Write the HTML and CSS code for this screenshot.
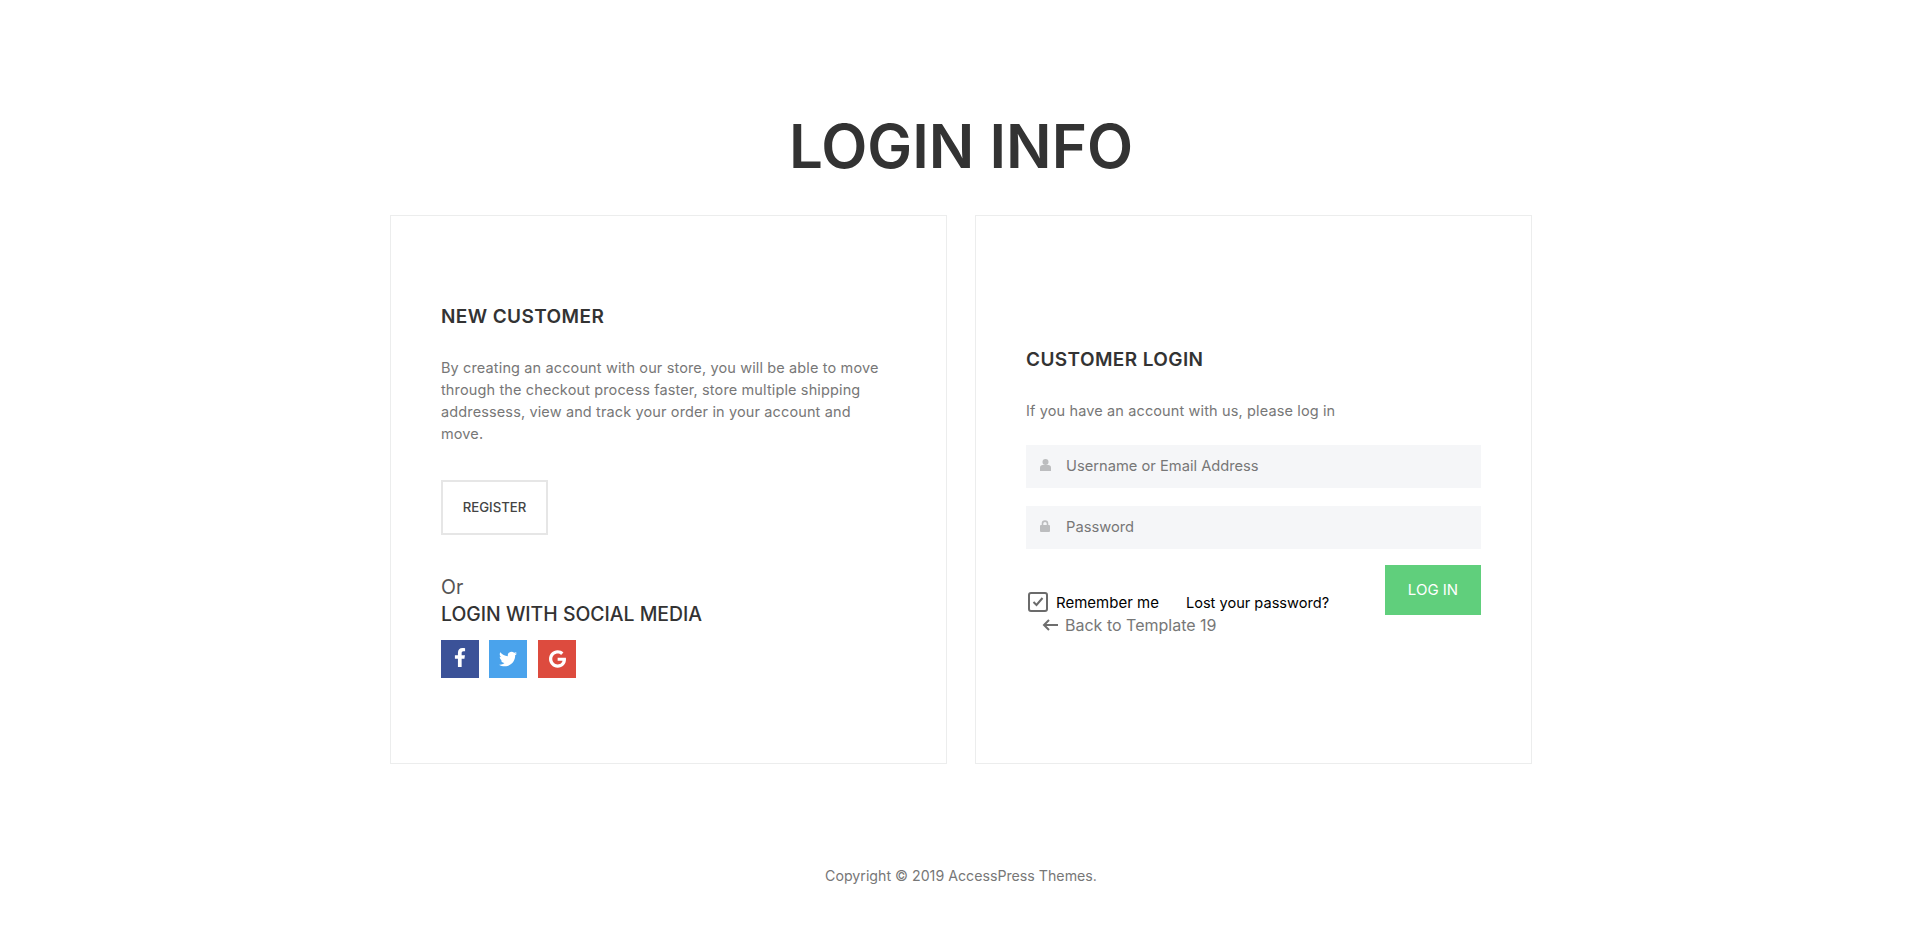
FILE: index.html
```html
<!DOCTYPE html>
<html lang="en">
<head>
  <meta charset="UTF-8" />
  <title>Login Info</title>
  <link rel="stylesheet" href="styles.css">
</head>
<body>

  <h1 class="page-title">LOGIN INFO</h1>

  <div class="container">
    <!-- New customer -->
    <div class="card">
      <h3 class="card-title new-title">NEW CUSTOMER</h3>
      <p class="card-text">By creating an account with our store, you will be able to move through the checkout process faster, store multiple shipping addressess, view and track your order in your account and move.</p>
      <a class="register-btn" href="#">REGISTER</a>
      <div class="or">Or</div>
      <h4 class="social-title">LOGIN WITH SOCIAL MEDIA</h4>
      <div class="social">
        <a class="social-link fb" href="#"><svg width="12" height="19" viewBox="0 0 320 512"><path fill="#fff" d="M279.14 288l14.22-92.66h-88.91v-60.13c0-25.35 12.42-50.06 52.24-50.06h40.42V6.26S260.43 0 225.36 0c-73.22 0-121.08 44.38-121.08 124.72v70.62H22.89V288h81.39v224h100.17V288z"/></svg></a>
        <a class="social-link tw" href="#"><svg width="18" height="18" viewBox="0 0 512 512"><path fill="#fff" d="M459.37 151.716c.325 4.548.325 9.097.325 13.645 0 138.72-105.583 298.558-298.558 298.558-59.452 0-114.68-17.219-161.137-47.106 8.447.974 16.568 1.299 25.34 1.299 49.055 0 94.213-16.568 130.274-44.832-46.132-.975-84.792-31.188-98.112-72.772 6.498.974 12.995 1.624 19.818 1.624 9.421 0 18.843-1.3 27.614-3.573-48.081-9.747-84.143-51.98-84.143-102.985v-1.299c13.969 7.797 30.214 12.67 47.431 13.319-28.264-18.843-46.781-51.005-46.781-87.391 0-19.492 5.197-37.36 14.294-52.954 51.655 63.675 129.3 105.258 216.365 109.807-1.624-7.797-2.599-15.918-2.599-24.04 0-57.828 46.782-104.934 104.934-104.934 30.213 0 57.502 12.67 76.67 33.137 23.715-4.548 46.456-13.32 66.599-25.34-7.798 24.366-24.366 44.833-46.132 57.827 21.117-2.273 41.584-8.122 60.426-16.243-14.292 20.791-32.161 39.308-52.628 54.253z"/></svg></a>
        <a class="social-link gp" href="#"><svg width="17" height="18" viewBox="0 0 488 512"><path fill="#fff" d="M488 261.8C488 403.3 391.1 504 248 504 110.8 504 0 393.2 0 256S110.8 8 248 8c66.8 0 123 24.5 166.3 64.9l-67.5 64.9C258.5 52.6 94.3 116.6 94.3 256c0 86.5 69.1 156.6 153.7 156.6 98.2 0 135-70.4 140.8-106.9H248v-85.3h236.1c2.3 12.7 3.9 24.9 3.9 41.4z"/></svg></a>
      </div>
    </div>

    <!-- Customer login -->
    <div class="card">
      <h3 class="card-title login-title">CUSTOMER LOGIN</h3>
      <p class="card-text login-text">If you have an account with us, please log in</p>
      <div class="field">
        <svg class="field-icon" width="11" height="12" viewBox="0 0 11 12"><circle cx="5.5" cy="3" r="3" fill="#bcbdbf"/><path fill="#bcbdbf" d="M0 12V8.6C0 7 1.2 6 2.6 6h5.8C9.8 6 11 7 11 8.6V12z"/></svg>
        <input class="field-input" type="text" placeholder="Username or Email Address">
      </div>
      <div class="field">
        <svg class="field-icon" width="10" height="12" viewBox="0 0 10 12"><path fill="none" stroke="#bcbdbf" stroke-width="1.6" d="M2.5 6V3.6a2.5 2.5 0 0 1 5 0V6"/><rect y="5" width="10" height="7" rx="1" fill="#bcbdbf"/></svg>
        <input class="field-input" type="password" placeholder="Password">
      </div>
      <div class="form-foot">
        <div class="foot-left">
          <div class="foot-row">
            <span class="check"><svg width="12" height="10" viewBox="0 0 12 10"><path fill="none" stroke="#6b6b6b" stroke-width="2" d="M1.5 5l3 3 6-7"/></svg></span>
            <span class="remember">Remember me</span>
            <a class="lost" href="#">Lost your password?</a>
          </div>
          <a class="back" href="#"><svg width="16" height="12" viewBox="0 0 16 12"><path fill="none" stroke="#6e6e6e" stroke-width="2" d="M16 6H2M7 1L2 6l5 5"/></svg>Back to Template 19</a>
        </div>
        <button class="login-btn">LOG IN</button>
      </div>
    </div>
  </div>

  <footer>Copyright © 2019 AccessPress Themes.</footer>

</body>
</html>
```

FILE: styles.css
```css
body {
  margin: 0;
  font-family: Inter, "Noto Sans", sans-serif;
  background: #fff;
  color: #777;
}

a {
  text-decoration: none;
}

.page-title {
  margin: 0;
  padding-top: 110px;
  font-size: 60px;
  line-height: 72px;
  font-weight: 600;
  color: #333;
  text-align: center;
}

.container {
  width: 1142px;
  margin: 33px auto 0;
  display: flex;
  gap: 28px;
}

.card {
  flex: 1;
  height: 549px;
  box-sizing: border-box;
  border: 1px solid #eceded;
  padding: 0 50px;
  display: flex;
  flex-direction: column;
  justify-content: center;
}

.card-title {
  margin: 0;
  font-size: 19px;
  line-height: 28px;
  font-weight: 600;
  letter-spacing: 0.4px;
  color: #333;
}

.new-title {
  margin-top: 1px;
}

.login-title {
  margin-top: 2px;
}

.card-text {
  margin: 26px 0 0;
  font-size: 14.5px;
  line-height: 22px;
  letter-spacing: 0.13px;
}

.login-text {
  margin-top: 26px;
}

.register-btn {
  align-self: flex-start;
  box-sizing: border-box;
  width: 107px;
  height: 55px;
  margin-top: 35px;
  border: 2px solid #e6e6e6;
  font-size: 13.2px;
  font-weight: 500;
  line-height: 51px;
  text-align: center;
  color: #444;
}

.or {
  margin-top: 40px;
  font-size: 19.5px;
  line-height: 24px;
  color: #555;
}

.social-title {
  margin: 1px 0 0;
  font-size: 19.4px;
  line-height: 28px;
  font-weight: 500;
  color: #333;
}

.social {
  display: flex;
  gap: 10px;
  margin-top: 12px;
}

.social-link {
  width: 38px;
  height: 38px;
  display: flex;
  align-items: center;
  justify-content: center;
}

.fb { background: #3b5298; padding-bottom: 2px; box-sizing: border-box; }
.tw { background: #4aa3ec; }
.gp { background: #dd4b3e; margin-left: 1px; }

.field {
  height: 43px;
  margin-top: 18px;
  background: #f5f6f8;
  display: flex;
  align-items: center;
  padding-left: 14px;
}

.login-text + .field {
  margin-top: 23px;
}

.field-icon {
  margin-top: -2px;
}

.field-input {
  flex: 1;
  min-width: 0;
  margin-left: 15px;
  border: none;
  background: none;
  outline: none;
  padding: 0;
  font-family: inherit;
  font-size: 14.7px;
  color: #777;
}

.field-input::placeholder {
  color: #777;
  opacity: 1;
}

.field-icon + .field-input[type="password"] {
  margin-left: 16px;
}

.form-foot {
  display: flex;
  justify-content: space-between;
  align-items: flex-start;
  margin-top: 16px;
}

.foot-left {
  padding: 27px 0 0 2px;
}

.foot-row {
  display: flex;
  align-items: center;
  height: 20px;
  font-size: 15px;
  color: #000;
}

.check {
  box-sizing: border-box;
  width: 20px;
  height: 20px;
  border: 2px solid #6b6b6b;
  border-radius: 3px;
  display: flex;
  align-items: center;
  justify-content: center;
}

.remember {
  margin: 2px 0 0 8px;
}

.lost {
  margin: 2px 0 0 27px;
  font-size: 14.6px;
  color: #000;
}

.back {
  display: flex;
  align-items: center;
  gap: 7px;
  margin: 2px 0 0 14px;
  font-size: 16px;
  line-height: 22px;
  color: #777;
}

.login-btn {
  width: 96px;
  height: 50px;
  border: none;
  padding: 0;
  background: #60cf7c;
  color: #fff;
  font-family: inherit;
  font-size: 15px;
}

footer {
  margin-top: 101px;
  padding-bottom: 58px;
  font-size: 14.2px;
  line-height: 22px;
  text-align: center;
}
```
